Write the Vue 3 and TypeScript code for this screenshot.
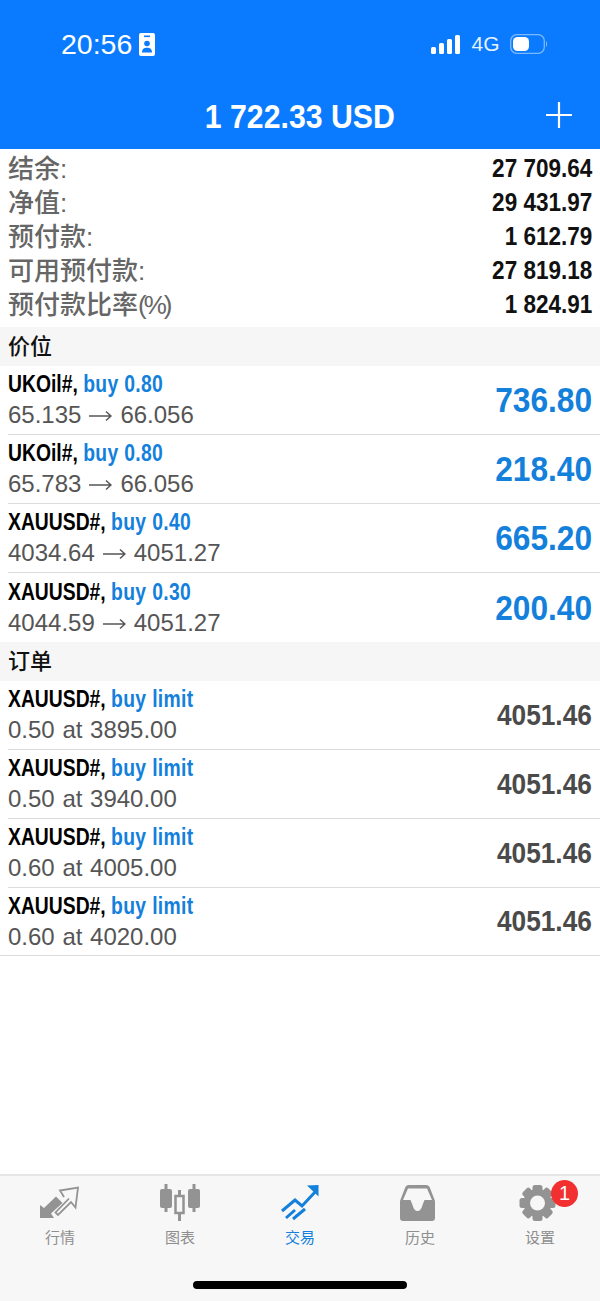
<script setup lang="ts">
const summary = [
  { label: '结余:', unit: '', value: '27 709.64' },
  { label: '净值:', unit: '', value: '29 431.97' },
  { label: '预付款:', unit: '', value: '1 612.79' },
  { label: '可用预付款:', unit: '', value: '27 819.18' },
  { label: '预付款比率', unit: '(%)', value: '1 824.91' },
]

const positions = [
  { symbol: 'UKOil#,', side: 'buy 0.80', from: '65.135', to: '66.056', amount: '736.80' },
  { symbol: 'UKOil#,', side: 'buy 0.80', from: '65.783', to: '66.056', amount: '218.40' },
  { symbol: 'XAUUSD#,', side: 'buy 0.40', from: '4034.64', to: '4051.27', amount: '665.20' },
  { symbol: 'XAUUSD#,', side: 'buy 0.30', from: '4044.59', to: '4051.27', amount: '200.40' },
]

const orders = [
  { symbol: 'XAUUSD#,', side: 'buy limit', detail: '0.50 at 3895.00', amount: '4051.46' },
  { symbol: 'XAUUSD#,', side: 'buy limit', detail: '0.50 at 3940.00', amount: '4051.46' },
  { symbol: 'XAUUSD#,', side: 'buy limit', detail: '0.60 at 4005.00', amount: '4051.46' },
  { symbol: 'XAUUSD#,', side: 'buy limit', detail: '0.60 at 4020.00', amount: '4051.46' },
]
</script>

<template>
  <div class="page">
    <header class="top">
      <div class="status">
        <div class="status-left">
          <span class="clock">20:56</span>
          <svg width="16" height="23" viewBox="0 0 16 23">
            <rect width="16" height="23" rx="2" fill="#fff" />
            <rect x="5" y="2.500" width="6" height="1.600" fill="#0a7bff" />
            <circle cx="8" cy="10.500" r="2.800" fill="#0a7bff" />
            <path d="M3 19.500c0-3.400 2-4.800 5-4.800s5 1.400 5 4.800z" fill="#0a7bff" />
          </svg>
        </div>
        <div class="status-right">
          <svg width="30" height="20" viewBox="0 0 30 20">
            <rect x="0" y="13" width="5" height="7" rx="1.500" fill="#fff" />
            <rect x="8" y="9" width="5" height="11" rx="1.500" fill="#fff" />
            <rect x="16" y="5" width="5" height="15" rx="1.500" fill="#fff" />
            <rect x="24" y="1" width="5" height="19" rx="1.500" fill="#fff" />
          </svg>
          <span class="net">4G</span>
          <svg width="38" height="20" viewBox="0 0 38 20">
            <rect x="0.700" y="0.700" width="33.600" height="18.600" rx="6" fill="none" stroke="#7db8ff" stroke-width="1.300" />
            <rect x="3" y="3" width="16" height="14" rx="4.500" fill="#fff" />
            <path d="M36 7c1.400.6 1.400 5.400 0 6z" fill="#7db8ff" />
          </svg>
        </div>
      </div>
      <div class="balance">
        <span class="balance-value">1 722.33 USD</span>
        <svg class="plus" width="26" height="26" viewBox="0 0 26 26">
          <path d="M13 0v26M0 13h26" stroke="#fff" stroke-width="2.200" />
        </svg>
      </div>
    </header>

    <section class="summary">
      <div v-for="row in summary" :key="row.label" class="summary-row">
        <span class="summary-label">{{ row.label }}<span v-if="row.unit" class="unit">{{ row.unit }}</span></span>
        <span class="summary-value">{{ row.value }}</span>
      </div>
    </section>

    <h2 class="section-title">价位</h2>
    <div v-for="(row, i) in positions" :key="i" class="trade" :class="{ last: i === positions.length - 1 }">
      <div class="trade-info">
        <div class="trade-head"><b>{{ row.symbol }}</b> <b class="side">{{ row.side }}</b></div>
        <div class="trade-detail">
          <span>{{ row.from }}</span>
          <svg width="23" height="12" viewBox="0 0 23 12">
            <path d="M0 6h22M17 1.500l5 4.500-5 4.500" fill="none" stroke="#555" stroke-width="1.500" />
          </svg>
          <span>{{ row.to }}</span>
        </div>
      </div>
      <span class="profit">{{ row.amount }}</span>
    </div>

    <h2 class="section-title">订单</h2>
    <div v-for="(row, i) in orders" :key="i" class="trade" :class="{ end: i === orders.length - 1 }">
      <div class="trade-info">
        <div class="trade-head"><b>{{ row.symbol }}</b> <b class="side">{{ row.side }}</b></div>
        <div class="trade-detail order">{{ row.detail }}</div>
      </div>
      <span class="price">{{ row.amount }}</span>
    </div>

    <div class="spacer"></div>

    <nav class="tabs">
      <div class="tab">
        <svg width="60" height="50" viewBox="30 1178 60 50">
          <path d="M40 1218v-13l4 3 12-11.500 6.500 6.500-11.500 10.500 3 4.500z" fill="#939393" />
          <path d="M64 1197l-4-6.500 18-3-2.500 20-4.500-5.500-13 13-2.500-2.500 13.500-14" fill="none" stroke="#939393" stroke-width="1.800" />
        </svg>
        <span>行情</span>
      </div>
      <div class="tab">
        <svg width="60" height="50" viewBox="150 1178 60 50">
          <path d="M160 1191q0-2 2-2h2.500v-5h3v5h2.500q2 0 2 2v15q0 2-2 2h-2.500v4h-3v-4h-2.500q-2 0-2-2zM188 1191q0-2 2-2h2.500v-5h3v5h2.500q2 0 2 2v15q0 2-2 2h-2.500v4h-3v-4h-2.500q-2 0-2-2z" fill="#939393" />
          <path d="M179.500 1190v6M179.500 1213v8" stroke="#939393" stroke-width="3" />
          <rect x="175.500" y="1196" width="8" height="17" fill="none" stroke="#939393" stroke-width="2.500" />
        </svg>
        <span>图表</span>
      </div>
      <div class="tab active">
        <svg width="60" height="50" viewBox="270 1178 60 50">
          <path d="M282 1211l13-11 7 6 14-15M286 1218l9-8M293 1219l12-10" fill="none" stroke="#1380dc" stroke-width="3" />
          <path d="M307 1185.500l11.500-.5v11.500z" fill="#1380dc" />
        </svg>
        <span>交易</span>
      </div>
      <div class="tab">
        <svg width="60" height="50" viewBox="390 1178 60 50">
          <path fill-rule="evenodd" d="M409 1185h17q3 0 4 3l5 13v17q0 3-3 3h-29q-3 0-3-3v-17l5-13q1-3 4-3zM408 1188.500l-5 11.500h7.500l2 5q1.500 6 5 6t5-6l2-5h7.500l-5-11.500z" fill="#939393" />
        </svg>
        <span>历史</span>
      </div>
      <div class="tab">
        <div class="gear">
          <svg width="60" height="50" viewBox="510 1178 60 50">
            <g fill="#939393">
              <circle cx="537.500" cy="1203" r="14" />
              <rect v-for="a in [0, 45, 90, 135]" :key="a" x="532.500" y="1185" width="10" height="36" rx="2.500" :transform="`rotate(${a} 537.500 1203)`" />
            </g>
            <circle cx="537.500" cy="1203" r="7.500" fill="#f7f7f7" />
          </svg>
          <span class="badge">1</span>
        </div>
        <span>设置</span>
      </div>
      <div class="home-bar"></div>
    </nav>
  </div>
</template>

<style>
html,
body {
  margin: 0;
  background: #fff;
}
</style>

<style scoped>
* {
  box-sizing: border-box;
}

.page {
  display: flex;
  flex-direction: column;
  width: 600px;
  height: 1301px;
  overflow: hidden;
  background: #fff;
  font-family: 'Liberation Sans', 'Noto Sans CJK SC', sans-serif;
}

.top {
  height: 149px;
  flex: none;
  padding: 30px 40px 0 61px;
  background: #0a7bff;
  color: #fff;
}

.status {
  display: flex;
  justify-content: space-between;
  align-items: center;
  height: 28px;
}

.status-left,
.status-right {
  display: flex;
  align-items: center;
}

.status-left {
  gap: 7px;
}

.status-right {
  gap: 10.500px;
  margin-right: 12px;
}

.clock {
  font-size: 28.500px;
}

.net {
  font-size: 21px;
  opacity: 0.9;
}

.balance {
  position: relative;
  margin: 28px 0 0 -61px;
  width: 600px;
  text-align: center;
}

.balance-value {
  display: inline-block;
  font-size: 34px;
  line-height: 60px;
  font-weight: 700;
  transform: scaleX(0.89);
}

.plus {
  position: absolute;
  right: 28px;
  top: 16px;
}

.summary {
  flex: none;
  padding: 3px 8px 5px;
  height: 178px;
}

.summary-row {
  display: flex;
  justify-content: space-between;
  align-items: center;
  height: 34px;
}

.summary-label {
  font-size: 26px;
  line-height: 30px;
  font-weight: 500;
  color: #666;
}

.unit {
  letter-spacing: -3px;
}

.summary-value {
  display: inline-block;
  padding-bottom: 2px;
  font-size: 25px;
  font-weight: 700;
  color: #111;
  transform: scaleX(0.9);
  transform-origin: right center;
}

.section-title {
  flex: none;
  height: 39px;
  margin: 0;
  padding-left: 8px;
  background: #f6f6f6;
  color: #111;
  font-size: 22px;
  font-weight: 500;
  line-height: 39px;
}

.trade {
  flex: none;
  display: flex;
  justify-content: space-between;
  align-items: center;
  height: 69px;
  margin-left: 8px;
  padding-right: 8px;
  border-bottom: 1px solid #dcdcdc;
}

.trade.last {
  border-bottom: none;
}

.trade.end {
  height: 68px;
  margin-left: 0;
  padding-left: 8px;
}

.trade-head {
  width: 320px;
  font-size: 23px;
  line-height: 30px;
  color: #000;
  transform: scaleX(0.84);
  transform-origin: left center;
}

.side {
  color: #1380dc;
  letter-spacing: 0.400px;
}

.trade-detail {
  display: flex;
  align-items: center;
  gap: 8px;
  font-size: 24px;
  line-height: 32px;
  color: #555;
}

.trade-detail svg {
  margin-top: 2px;
}

.trade-detail.order {
  word-spacing: 1px;
}

.profit {
  display: inline-block;
  font-size: 35px;
  font-weight: 700;
  color: #1380dc;
  transform: scaleX(0.905);
  transform-origin: right center;
}

.price {
  display: inline-block;
  font-size: 29px;
  font-weight: 700;
  color: #4a4a4a;
  transform: scaleX(0.905);
  transform-origin: right center;
}

.spacer {
  flex: 1;
}

.tabs {
  position: relative;
  flex: none;
  display: flex;
  height: 127px;
  padding: 2px 0 0;
  background: #f7f7f7;
  border-top: 2px solid #e6e6e6;
}

.tab {
  display: flex;
  flex-direction: column;
  align-items: center;
  width: 120px;
  color: #8e8e8e;
  font-size: 15px;
  line-height: 20px;
}

.tab.active {
  color: #1380dc;
}

.tab svg {
  display: block;
}

.gear {
  position: relative;
}

.badge {
  position: absolute;
  top: 2px;
  right: -8px;
  width: 27px;
  height: 27px;
  border-radius: 50%;
  background: #f23030;
  color: #fff;
  font-size: 20px;
  line-height: 27px;
  text-align: center;
}

.home-bar {
  position: absolute;
  left: 193px;
  bottom: 12px;
  width: 214px;
  height: 8px;
  border-radius: 4px;
  background: #000;
}
</style>
